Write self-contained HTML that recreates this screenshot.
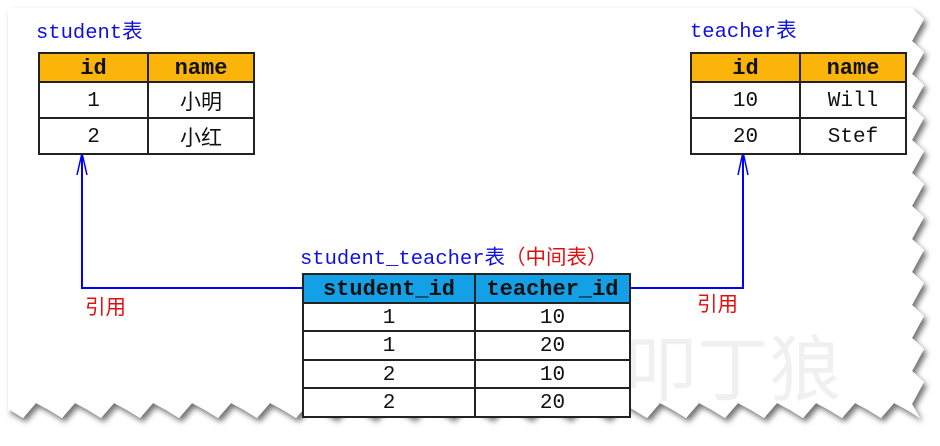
<!DOCTYPE html>
<html><head><meta charset="utf-8">
<style>
body{margin:0;width:940px;height:446px;background:#fff;position:relative;overflow:hidden;font-family:"Liberation Mono","Noto Sans CJK SC",monospace;}
.abs{position:absolute}
table{position:absolute;border-collapse:collapse;font-family:"Liberation Mono","Noto Sans CJK SC",monospace;font-size:21px;color:#111}
td{border:2px solid #222;text-align:center;padding:2px 0 0 0;background:#fff}
th{border:2px solid #222;text-align:center;padding:2px 0 0 0;font-family:"Liberation Mono",monospace;font-weight:bold;font-size:22px}
.o th{background:#fbb40a}
.b th{background:#14a0e6}
.lbl{position:absolute;font-size:20.5px;color:#1010e0;font-family:"Liberation Mono","Noto Sans CJK SC",monospace;line-height:24px}
.red{color:#e01010;font-family:"Liberation Sans","Noto Sans CJK SC",sans-serif}
</style></head><body>
<svg class="abs" style="left:0;top:0" width="940" height="446">
<defs><filter id="s" x="-5%" y="-5%" width="115%" height="115%"><feDropShadow dx="3" dy="4" stdDeviation="3" flood-color="#000" flood-opacity="0.55"/></filter></defs>
<polygon id="pg" fill="#fff" filter="url(#s)" points="8,8 918,8 918,410 8,410"/>
<g stroke="#0000ff" stroke-width="2" fill="none">
<polyline points="82,153 82,288 302,288"/>
<polyline points="630,288 743,288 743,152"/>
<polyline stroke-width="1.5" points="77,175 82,153 87,175"/>
<polyline stroke-width="1.5" points="738,175 743,152 748,175"/>
</g>
<text x="625" y="395" font-size="72" fill="#f0f0f0" font-family="Noto Sans CJK SC">叩丁狼</text>
</svg>
<div class="lbl" style="left:36px;top:22px">student表</div>
<div class="lbl" style="left:690px;top:21px">teacher表</div>
<div class="lbl" style="left:300px;top:246px">student_teacher表<span class="red">（中间表）</span></div>
<div class="lbl red" style="left:85px;top:296px">引用</div>
<div class="lbl red" style="left:697px;top:293px">引用</div>
<table class="o" style="left:38px;top:52px;width:217px">
<tr style="height:29px"><th style="width:107px">id</th><th>name</th></tr>
<tr style="height:36px"><td>1</td><td>小明</td></tr>
<tr style="height:36px"><td>2</td><td>小红</td></tr></table>
<table class="o" style="left:690px;top:52px;width:217px">
<tr style="height:29px"><th style="width:107px">id</th><th>name</th></tr>
<tr style="height:36px"><td>10</td><td>Will</td></tr>
<tr style="height:36px"><td>20</td><td>Stef</td></tr></table>
<table class="b" style="left:302px;top:273px;width:329px">
<tr style="height:29px"><th style="width:170px">student_id</th><th>teacher_id</th></tr>
<tr style="height:28px"><td>1</td><td>10</td></tr>
<tr style="height:29px"><td>1</td><td>20</td></tr>
<tr style="height:28px"><td>2</td><td>10</td></tr>
<tr style="height:29px"><td>2</td><td>20</td></tr></table>
<script>
var p=["8,8"],i=0;
for(var y=8;y<=408;y+=11){p.push((i%3==0?912:(i%3==1?924:918))+","+y);i++;}
for(var x=920;x>=8;x-=13){p.push(x+","+(i%3==0?403:(i%3==1?418:410)));i++;}
p.push("8,412");
document.getElementById("pg").setAttribute("points",p.join(" "));
</script>
</body></html>
